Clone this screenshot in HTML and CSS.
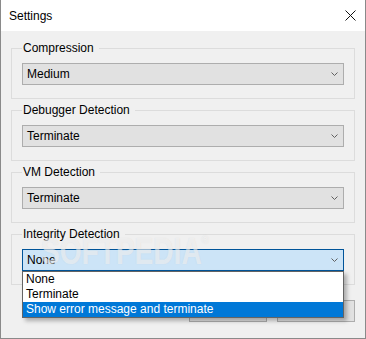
FILE: index.html
```html
<!DOCTYPE html>
<html>
<head>
<meta charset="utf-8">
<title>Settings</title>
<link rel="stylesheet" href="styles.css">
</head>
<body>
<div class="window">
  <div class="titlebar">
    <span class="title">Settings</span>
    <svg class="close" width="11" height="11" viewBox="0 0 11 11"><path d="M0.5 0.5 L10.5 10.5 M10.5 0.5 L0.5 10.5" stroke="#111" stroke-width="1" fill="none"/></svg>
  </div>
  <div class="content">
    <fieldset class="group">
      <legend>Compression</legend>
      <div class="combo"><span>Medium</span><svg class="chev" width="7" height="4" viewBox="0 0 7 4"><path d="M0.5 0.5 L3.5 3.5 L6.5 0.5" stroke="#606060" fill="none"/></svg></div>
    </fieldset>
    <fieldset class="group">
      <legend>Debugger Detection</legend>
      <div class="combo"><span>Terminate</span><svg class="chev" width="7" height="4" viewBox="0 0 7 4"><path d="M0.5 0.5 L3.5 3.5 L6.5 0.5" stroke="#606060" fill="none"/></svg></div>
    </fieldset>
    <fieldset class="group">
      <legend>VM Detection</legend>
      <div class="combo"><span>Terminate</span><svg class="chev" width="7" height="4" viewBox="0 0 7 4"><path d="M0.5 0.5 L3.5 3.5 L6.5 0.5" stroke="#606060" fill="none"/></svg></div>
    </fieldset>
    <fieldset class="group">
      <legend>Integrity Detection</legend>
      <div class="combo-wrap">
        <div class="combo open"><span>None</span><svg class="chev" width="7" height="4" viewBox="0 0 7 4"><path d="M0.5 0.5 L3.5 3.5 L6.5 0.5" stroke="#606060" fill="none"/></svg></div>
        <ul class="dropdown">
          <li>None</li>
          <li>Terminate</li>
          <li class="selected">Show error message and terminate</li>
        </ul>
      </div>
    </fieldset>
    <div class="buttons">
      <button class="btn">OK</button>
      <button class="btn">Cancel</button>
    </div>
  </div>
  <div class="watermark">SOFTPEDIA<sup>®</sup></div>
</div>
</body>
</html>
```
FILE: styles.css
```css
html, body {
  margin: 0;
  padding: 0;
}
body {
  font-family: "Liberation Sans", Arial, sans-serif;
  font-size: 12px;
  color: #000;
  background: #f0f0f0;
}
.window {
  position: relative;
  width: 366px;
  height: 339px;
  box-sizing: border-box;
  border: 1px solid #8a8a8a;
  border-top: none;
  display: flex;
  flex-direction: column;
  overflow: hidden;
}
.titlebar {
  height: 31px;
  flex: 0 0 31px;
  background: #fff;
  display: flex;
  align-items: center;
  justify-content: space-between;
  padding: 0 9px 0 8px;
}
.title {
  font-size: 12px;
  line-height: 16px;
  margin-top: 1px;
}
.close {
  display: block;
  margin-top: 0;
}
.content {
  flex: 1;
  background: #f0f0f0;
  padding: 9px 10px 0 10px;
}
.group {
  margin: 0 0 3px 0;
  padding: 7px 10px 13px 10px;
  border: 1px solid #dcdcdc;
  min-width: 0;
}
.group legend {
  padding: 0 5px 0 1px;
  line-height: 16px;
  font-size: 12px;
}
.combo {
  height: 22px;
  box-sizing: border-box;
  border: 1px solid #adadad;
  background: #e1e1e1;
  display: flex;
  align-items: center;
  justify-content: space-between;
  padding: 0 5px 0 4px;
  line-height: 16px;
}
.chev {
  display: block;
}
.combo.open {
  background: #cce4f7;
  border-color: #005499;
}
.combo-wrap {
  position: relative;
}
.dropdown {
  position: absolute;
  z-index: 2;
  top: 22px;
  left: 0;
  right: 0;
  margin: 0;
  padding: 0;
  list-style: none;
  background: #fff;
  border: 1px solid #646464;
  box-shadow: 3px 3px 4px rgba(0, 0, 0, 0.28);
}
.dropdown li {
  height: 15px;
  line-height: 15px;
  padding-left: 3px;
  white-space: nowrap;
}
.dropdown li.selected {
  background: #0078d7;
  color: #fff;
}
.buttons {
  display: flex;
  justify-content: flex-end;
  gap: 10px;
  margin-top: 15px;
}
.btn {
  width: 78px;
  height: 22px;
  box-sizing: border-box;
  border: 1px solid #adadad;
  background: #e1e1e1;
  font-family: "Liberation Sans", Arial, sans-serif;
  font-size: 12px;
  padding: 0;
  margin: 0;
}
.watermark {
  position: absolute;
  z-index: 3;
  left: 40px;
  top: 234px;
  font-size: 36px;
  font-weight: bold;
  line-height: 36px;
  color: rgba(255, 255, 255, 0.5);
  text-shadow: 0 0 1px rgba(160, 160, 160, 0.25);
  transform: scaleX(0.78);
  transform-origin: left top;
  pointer-events: none;
  white-space: nowrap;
}
.watermark sup {
  font-size: 12px;
  vertical-align: top;
  line-height: 12px;
}
```
